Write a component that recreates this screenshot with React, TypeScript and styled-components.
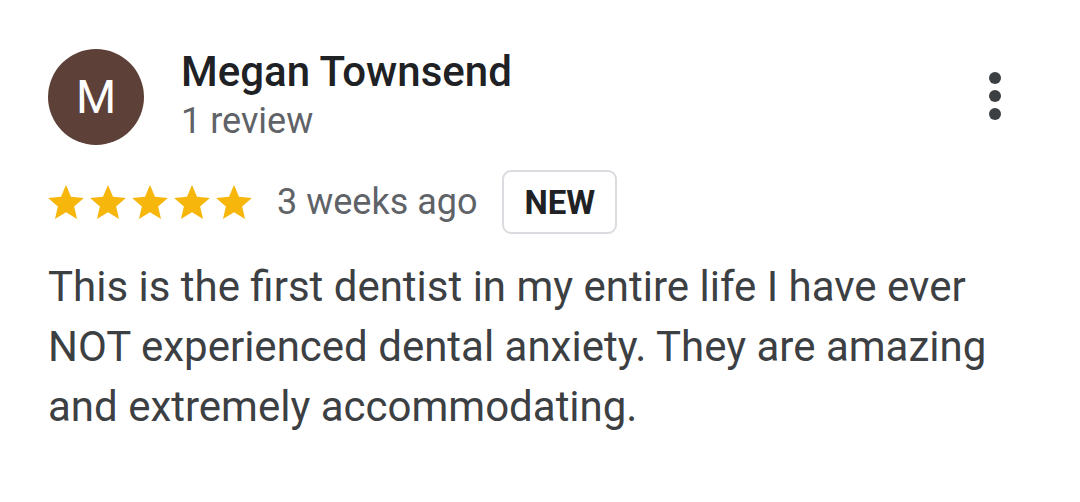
import styled, { createGlobalStyle } from 'styled-components';

const GlobalStyle = createGlobalStyle`
  html, body {
    margin: 0;
    padding: 0;
    background: #ffffff;
    font-family: Roboto, "Liberation Sans", Arial, sans-serif;
  }
`;

const Review = styled.div`
  width: 1080px;
  height: 502px;
  box-sizing: border-box;
  padding: 49px 0 0 48px;
  background: #ffffff;
`;

const Header = styled.div`
  display: flex;
  align-items: flex-start;
`;

const Avatar = styled.div`
  width: 96px;
  height: 96px;
  border-radius: 50%;
  background: #5d4037;
  color: #ffffff;
  display: flex;
  align-items: center;
  justify-content: center;
  font-size: 46px;
  flex-shrink: 0;
`;

const Author = styled.div`
  margin-left: 37px;
  flex: 1;
  display: flex;
  flex-direction: column;
`;

const Name = styled.div`
  font-size: 42px;
  font-weight: 500;
  color: #202124;
  line-height: 46px;
`;

const Sub = styled.div`
  font-size: 36px;
  color: #5f6368;
  line-height: 44px;
  margin-top: 4px;
`;

const MenuButton = styled.div`
  width: 24px;
  display: flex;
  flex-direction: column;
  align-items: center;
  gap: 6px;
  margin-top: 23px;
  margin-right: 73px;
`;

const Dot = styled.span`
  width: 12px;
  height: 12px;
  border-radius: 50%;
  background: #3c4043;
`;

const Meta = styled.div`
  display: flex;
  align-items: center;
  margin-top: 25px;
`;

const Stars = styled.div`
  display: flex;
  gap: 6px;
`;

const When = styled.span`
  font-size: 36px;
  color: #5f6368;
  margin-left: 25px;
`;

const Badge = styled.span`
  margin-left: 25px;
  height: 64px;
  box-sizing: border-box;
  padding: 0 20px;
  border: 2px solid #dadce0;
  border-radius: 9px;
  display: flex;
  align-items: center;
  font-size: 33px;
  font-weight: 700;
  color: #202124;
`;

const Body = styled.p`
  margin: 23px 0 0 0;
  font-size: 42px;
  line-height: 60px;
  color: #3c4043;
  width: 990px;
`;

function Star() {
  return (
    <svg width="36" height="34" viewBox="2 2 20 19">
      <path
        fill="#f6b60c"
        d="M12 17.27L18.18 21l-1.64-7.03L22 9.24l-7.19-.61L12 2 9.19 8.63 2 9.24l5.46 4.73L5.82 21z"
      />
    </svg>
  );
}

export default function App() {
  return (
    <>
      <GlobalStyle />
      <Review>
        <Header>
          <Avatar>M</Avatar>
          <Author>
            <Name>Megan Townsend</Name>
            <Sub>1 review</Sub>
          </Author>
          <MenuButton>
            <Dot />
            <Dot />
            <Dot />
          </MenuButton>
        </Header>
        <Meta>
          <Stars>
            {[0, 1, 2, 3, 4].map((i) => (
              <Star key={i} />
            ))}
          </Stars>
          <When>3 weeks ago</When>
          <Badge>NEW</Badge>
        </Meta>
        <Body>
          This is the first dentist in my entire life I have ever NOT experienced dental anxiety. They are amazing
          and extremely accommodating.
        </Body>
      </Review>
    </>
  );
}
